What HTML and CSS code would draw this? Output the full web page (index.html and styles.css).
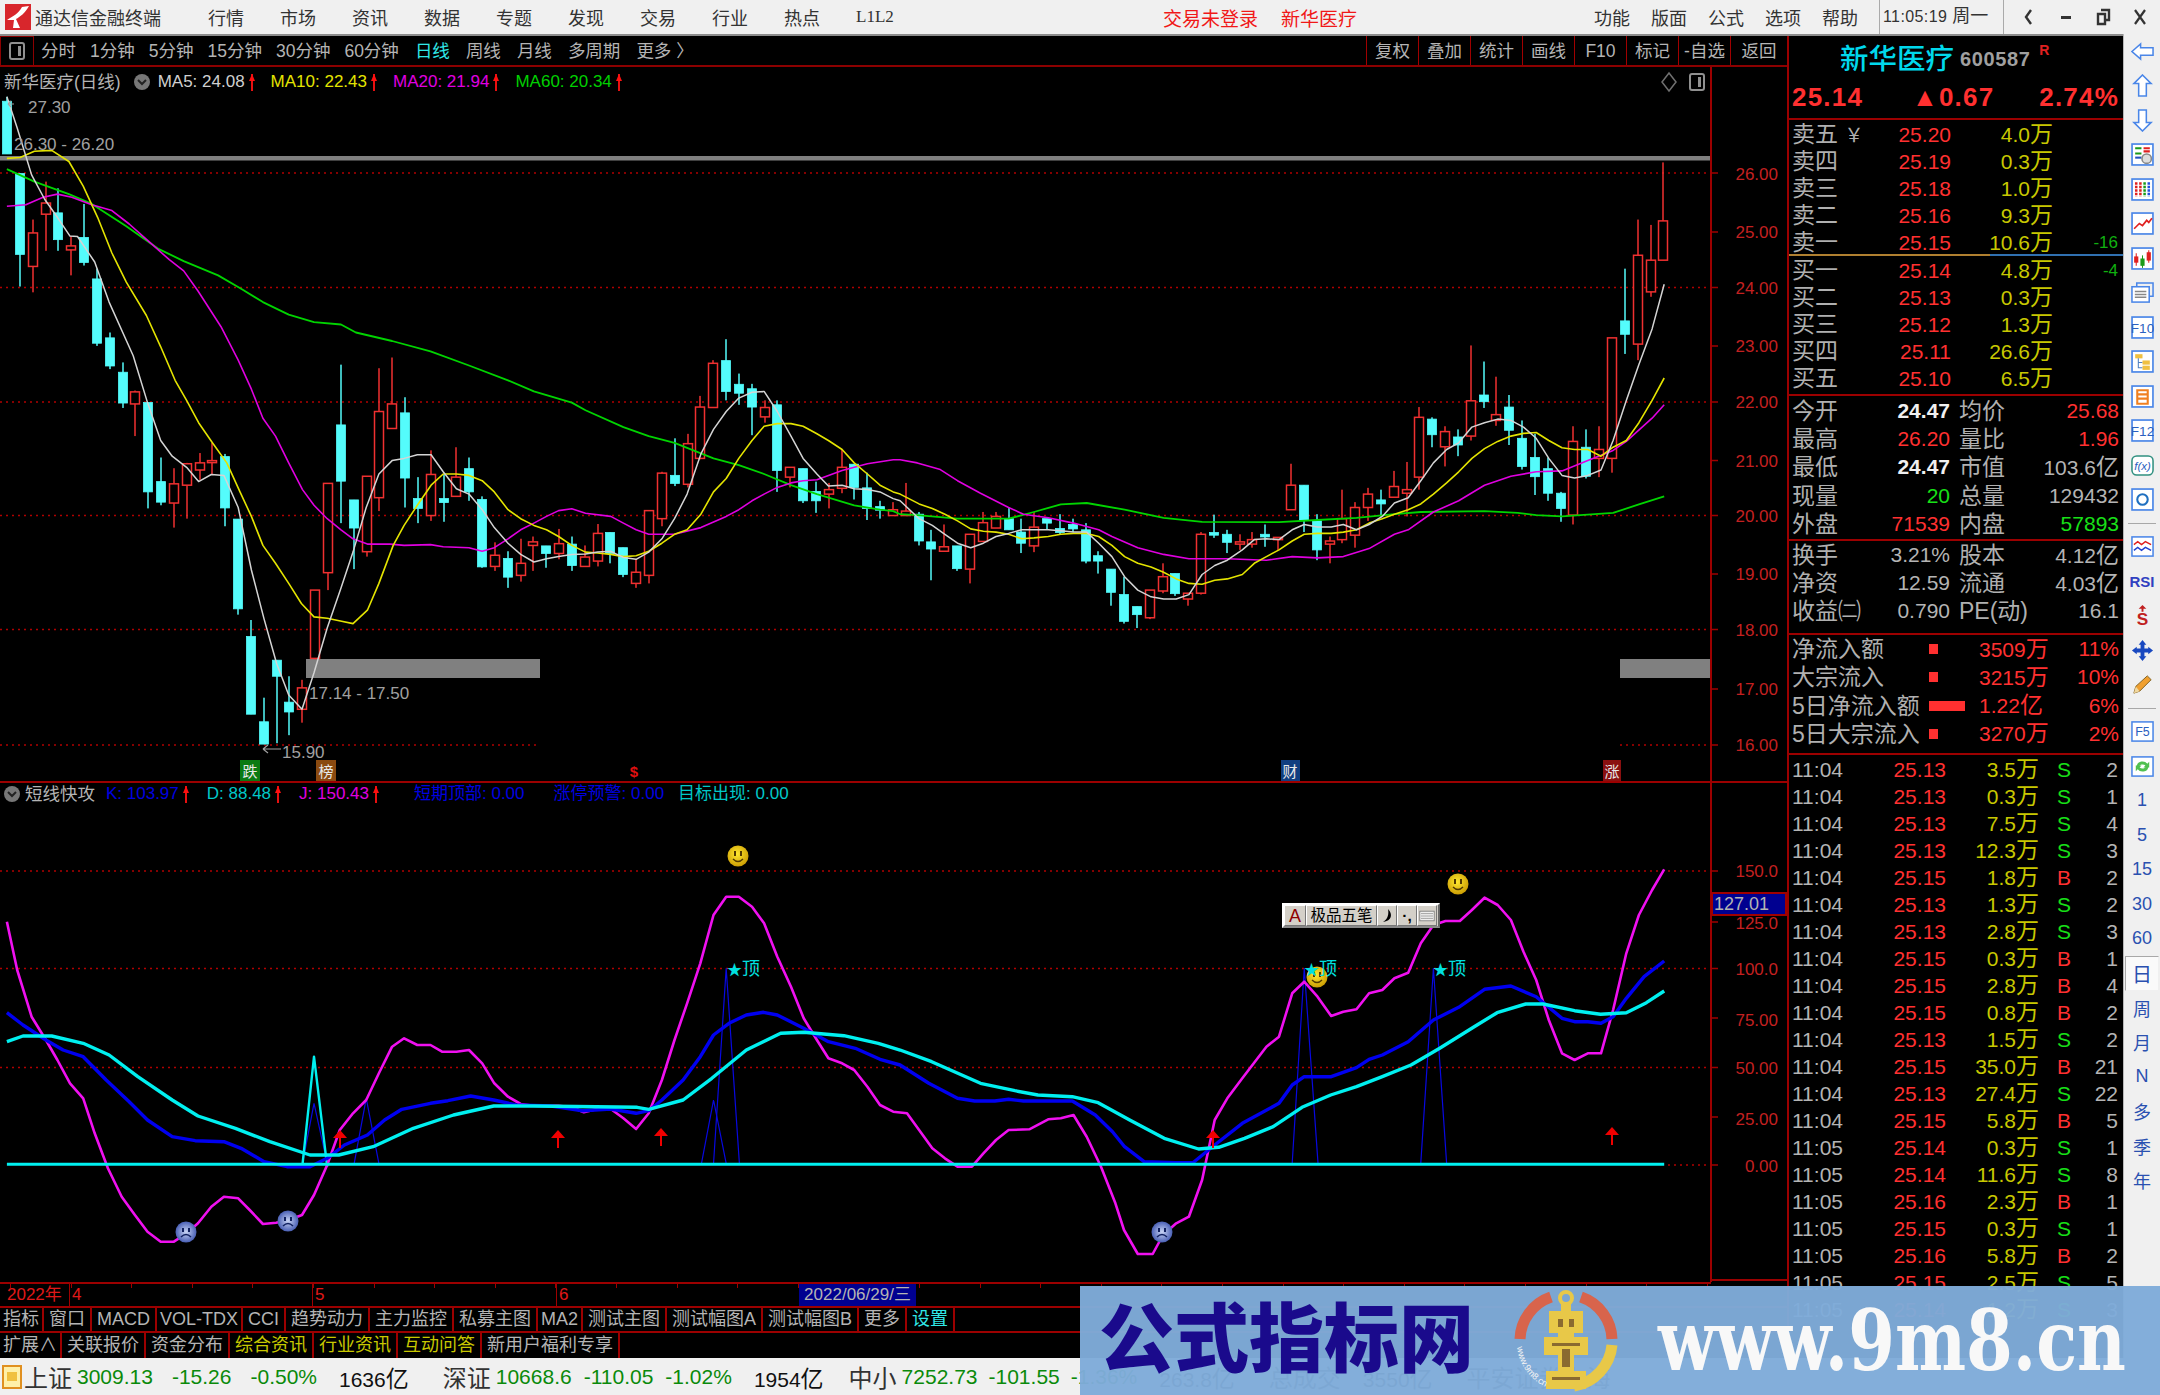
FILE: index.html
```html
<!DOCTYPE html>
<html lang="zh-CN">
<head>
    <meta charset="UTF-8">
    <title>通达信金融终端</title>
    <link rel="stylesheet" href="styles.css">
</head>
<body>
<div class="app">

    <header class="titlebar">
        <svg class="app-logo" viewBox="0 0 26 26">
            <rect width="26" height="26" fill="#d8262c"/>
            <path d="M2 16 C8 12 13 10 17 3 L24 2 C20 9 15 13 11 15 L15 24 L8 24 L9 16 Z" fill="#fff"/>
        </svg>
        <span class="app-name">通达信金融终端</span>
        <nav class="menu">
            <span>行情</span><span>市场</span><span>资讯</span><span>数据</span><span>专题</span>
            <span>发现</span><span>交易</span><span>行业</span><span>热点</span><span class="menu-l2">L1L2</span>
        </nav>
        <div class="notice"><span>交易未登录</span><span>新华医疗</span></div>
        <div class="title-right">
            <nav class="menu menu-small">
                <span>功能</span><span>版面</span><span>公式</span><span>选项</span><span>帮助</span>
            </nav>
            <div class="clock"><span class="clock-time">11:05:19</span> 周一</div>
            <div class="win-ctrl">
                <svg viewBox="0 0 16 20"><path d="M10 3 L5 10 L10 17" fill="none" stroke="#333" stroke-width="2.4"/></svg>
                <svg viewBox="0 0 16 20"><rect x="3" y="9" width="10" height="3" fill="#333"/></svg>
                <svg viewBox="0 0 16 20"><path d="M6 3 H14 V13 H11 M3 7 H10 V17 H3 Z" fill="none" stroke="#333" stroke-width="2.4"/></svg>
                <svg viewBox="0 0 16 20"><path d="M3 3 L13 17 M13 3 L3 17" fill="none" stroke="#333" stroke-width="2.2"/></svg>
            </div>
        </div>
    </header>

    <div class="main">
        <div class="left">
            <div class="period-bar">
                <div class="panel-toggle"><svg viewBox="0 0 16 18"><use href="#ic-panel"/></svg></div>
                <div class="periods">
                    <span>分时</span><span>1分钟</span><span>5分钟</span><span>15分钟</span><span>30分钟</span><span>60分钟</span>
                    <span class="on">日线</span><span>周线</span><span>月线</span><span>多周期</span><span>更多 〉</span>
                </div>
                <div class="period-btns">
                    <span>复权</span><span>叠加</span><span>统计</span><span>画线</span><span>F10</span>
                    <span>标记</span><span>-自选</span><span>返回</span>
                </div>
            </div>

            <div class="chart-area">
                <svg id="chart" class="chart" viewBox="0 67 1787 1215">
                    <defs>
                        <symbol id="ic-panel" viewBox="0 0 16 18">
                            <rect x="1" y="1" width="14" height="16" rx="2" fill="none" stroke="#909090" stroke-width="2"/>
                            <rect x="9" y="4" width="3" height="10" fill="#909090"/>
                        </symbol>
                        <radialGradient id="g-smile" cx="45%" cy="40%" r="65%">
                            <stop offset="0" stop-color="#ffe830"/><stop offset="1" stop-color="#c89800"/>
                        </radialGradient>
                        <radialGradient id="g-frown" cx="50%" cy="50%" r="60%">
                            <stop offset="0" stop-color="#c8d4f4"/><stop offset="1" stop-color="#3048a8"/>
                        </radialGradient>
                        <symbol id="smile" viewBox="0 0 22 22">
                            <circle cx="11" cy="11" r="10.5" fill="url(#g-smile)"/>
                            <rect x="7" y="6" width="2" height="5" fill="#503800"/><rect x="13" y="6" width="2" height="5" fill="#503800"/>
                            <path d="M6 14 Q11 19 16 14" fill="none" stroke="#503800" stroke-width="1.4"/>
                        </symbol>
                        <symbol id="frown" viewBox="0 0 22 22">
                            <circle cx="11" cy="11" r="10.5" fill="url(#g-frown)"/>
                            <rect x="7" y="7" width="2" height="4" fill="#102060"/><rect x="13" y="7" width="2" height="4" fill="#102060"/>
                            <path d="M6 16 Q11 11 16 16" fill="none" stroke="#102060" stroke-width="1.4"/>
                        </symbol>
                        <symbol id="uparrow" viewBox="0 0 14 18">
                            <path d="M7 0 L14 8 H8 V18 H6 V8 H0 Z" fill="#f00000"/>
                        </symbol>
                    </defs>

                    <g class="grid">
                        <line x1="0" y1="173" x2="1711" y2="173"/>
                        <line x1="0" y1="287.5" x2="1711" y2="287.5"/>
                        <line x1="0" y1="402" x2="1711" y2="402"/>
                        <line x1="0" y1="515.5" x2="1711" y2="515.5"/>
                        <line x1="0" y1="629.5" x2="1711" y2="629.5"/>
                        <line x1="0" y1="745" x2="540" y2="745"/>
                        <line x1="1620" y1="745" x2="1711" y2="745"/>
                        <line x1="0" y1="871" x2="1711" y2="871"/>
                        <line x1="0" y1="968.5" x2="1711" y2="968.5"/>
                        <line x1="0" y1="1067.5" x2="1711" y2="1067.5"/>
                        <line x1="1668" y1="1165" x2="1711" y2="1165"/>
                    </g>

                    <rect class="hbar" x="0" y="156" width="1710" height="4.5"/>
                    <rect class="hbar" x="306" y="659" width="234" height="19"/>
                    <rect class="hbar" x="1620" y="659" width="90" height="19"/>

                    <g id="candles"></g>
                    <g id="lines"></g>

                    <g class="ptxt">
                        <path class="ptr" d="M14 104 L8 104 M8 104 L11 101 M8 104 L11 107"/>
                        <text x="28" y="107">27.30</text>
                        <text x="14" y="144">26.30 - 26.20</text>
                        <text x="309" y="693">17.14 - 17.50</text>
                        <path class="ptr" d="M281 749 L263 749 M263 749 L268 745 M263 749 L268 753"/>
                        <text x="282" y="752">15.90</text>
                    </g>

                    <g class="badges">
                        <rect x="240" y="760" width="20" height="21" fill="#0a7a12"/><text x="250" y="771">跌</text>
                        <rect x="316" y="760" width="20" height="21" fill="#8a4a10"/><text x="326" y="771">榜</text>
                        <text x="634" y="771" class="dollar">$</text>
                        <rect x="1281" y="760" width="19" height="21" fill="#103e80"/><text x="1290" y="771">财</text>
                        <rect x="1603" y="760" width="18" height="21" fill="#8a1010"/><text x="1612" y="771">涨</text>
                    </g>

                    <g class="axis-lines">
                        <line x1="0" y1="782" x2="1787" y2="782"/>
                        <line x1="1711" y1="67" x2="1711" y2="1282"/>
                        <line x1="1711" y1="1280" x2="1787" y2="1280"/>
                    </g>
                    <g class="ticks">
                        <path d="M1711 173 h7 M1711 232 h7 M1711 287.5 h7 M1711 346 h7 M1711 402 h7 M1711 460.5 h7 M1711 515.5 h7 M1711 574 h7 M1711 629.5 h7 M1711 689 h7 M1711 745 h7 M1711 871 h7 M1711 922 h7 M1711 968.5 h7 M1711 1018 h7 M1711 1067.5 h7 M1711 1117 h7 M1711 1165 h7"/>
                    </g>
                    <g class="ax">
                        <text x="1778" y="174">26.00</text><text x="1778" y="232">25.00</text>
                        <text x="1778" y="288">24.00</text><text x="1778" y="346">23.00</text>
                        <text x="1778" y="402">22.00</text><text x="1778" y="461">21.00</text>
                        <text x="1778" y="516">20.00</text><text x="1778" y="574">19.00</text>
                        <text x="1778" y="630">18.00</text><text x="1778" y="689">17.00</text>
                        <text x="1778" y="745">16.00</text>
                        <text x="1778" y="871">150.0</text><text x="1778" y="923">125.0</text>
                        <text x="1778" y="969">100.0</text><text x="1778" y="1020">75.00</text>
                        <text x="1778" y="1068">50.00</text><text x="1778" y="1119">25.00</text>
                        <text x="1778" y="1166">0.00</text>
                    </g>
                    <rect class="tag" x="1712" y="893" width="74" height="22"/>
                    <text class="tag-text" x="1714" y="904">127.01</text>

                    <g id="spikes"></g>
                    <g id="kdj"></g>

                    <use href="#uparrow" x="333" y="1130" width="14" height="18"/>
                    <use href="#uparrow" x="551" y="1130" width="14" height="18"/>
                    <use href="#uparrow" x="654" y="1128" width="14" height="18"/>
                    <use href="#uparrow" x="1206" y="1130" width="14" height="18"/>
                    <use href="#uparrow" x="1605" y="1127" width="14" height="18"/>

                    <use href="#smile" x="727" y="845" width="22" height="22"/>
                    <use href="#smile" x="1306" y="966" width="22" height="22"/>
                    <use href="#smile" x="1447" y="873" width="22" height="22"/>
                    <use href="#frown" x="175" y="1221" width="22" height="22"/>
                    <use href="#frown" x="277" y="1210" width="22" height="22"/>
                    <use href="#frown" x="1151" y="1221" width="22" height="22"/>

                    <g class="top-sign">
                        <text x="727" y="969"><tspan class="star">★</tspan>顶</text>
                        <text x="1304" y="969"><tspan class="star">★</tspan>顶</text>
                        <text x="1433" y="969"><tspan class="star">★</tspan>顶</text>
                    </g>

                    <path d="M1669 73 L1676 82 L1669 91 L1662 82 Z" fill="none" stroke="#707070" stroke-width="1.5"/>
                    <use href="#ic-panel" x="1689" y="73" width="16" height="18"/>
                </svg>

                <div class="legend legend-main">
                    <span class="stock-name">新华医疗(日线)</span>
                    <svg class="chev" viewBox="0 0 16 16"><circle cx="8" cy="8" r="8" fill="#777"/><path d="M4 6 L8 10 L12 6" fill="none" stroke="#222" stroke-width="2"/></svg>
                    <span class="lg c-white">MA5: 24.08</span><i class="up"></i>
                    <span class="lg c-yellow">MA10: 22.43</span><i class="up"></i>
                    <span class="lg c-magenta">MA20: 21.94</span><i class="up"></i>
                    <span class="lg c-green">MA60: 20.34</span><i class="up"></i>
                </div>

                <div class="legend legend-sub">
                    <svg class="chev" viewBox="0 0 16 16"><circle cx="8" cy="8" r="8" fill="#777"/><path d="M4 6 L8 10 L12 6" fill="none" stroke="#222" stroke-width="2"/></svg>
                    <span class="stock-name">短线快攻</span>
                    <span class="lg c-blue">K: 103.97</span><i class="up"></i>
                    <span class="lg c-teal">D: 88.48</span><i class="up"></i>
                    <span class="lg c-magenta">J: 150.43</span><i class="up"></i>
                    <span class="lg c-blue lg-top">短期顶部: 0.00</span>
                    <span class="lg c-blue lg-limit">涨停预警: 0.00</span>
                    <span class="lg c-teal lg-goal">目标出现: 0.00</span>
                </div>

                <div class="ime">
                    <span class="ime-a">A</span>
                    <span class="ime-name">极品五笔</span>
                    <span class="ime-btn"><svg viewBox="0 0 14 16"><path d="M8 1 C13 6 12 13 3 14 C8 11 9 6 8 1 Z" fill="#000"/></svg></span>
                    <span class="ime-btn ime-punct">·,</span>
                    <span class="ime-btn"><svg viewBox="0 0 20 16"><rect x="1" y="2" width="18" height="12" fill="#eee" stroke="#777"/><path d="M3 5 H17 M3 8 H17 M3 11 H17" stroke="#555" stroke-dasharray="1.5 1"/></svg></span>
                </div>
            </div>

            <div class="date-bar">
                <span class="dc dc-year">2022年</span>
                <span class="dc dc-4">4</span>
                <span class="dc dc-5">5</span>
                <span class="dc dc-6">6</span>
                <span class="dc-now">2022/06/29/三</span>
            </div>

            <div class="tabs tabs-1">
                <span class="t-tight">指标</span><span>窗口</span><span>MACD</span><span class="t-tight">VOL-TDX</span><span>CCI</span><span>趋势动力</span>
                <span>主力监控</span><span>私募主图</span><span class="t-tight">MA2</span><span>测试主图</span><span>测试幅图A</span><span>测试幅图B</span>
                <span>更多</span><span class="t-cyan">设置</span>
            </div>
            <div class="tabs tabs-2">
                <span class="t-tight">扩展∧</span><span>关联报价</span><span>资金分布</span><span class="t-yellow">综合资讯</span>
                <span class="t-yellow">行业资讯</span><span class="t-yellow">互动问答</span><span>新用户福利专享</span>
            </div>
        </div>

        <aside class="quote">
            <div class="q-head">
                <div class="q-name"><b>新华医疗</b><span class="q-code">600587</span><sup>R</sup></div>
                <div class="q-price"><span>25.14</span><span>▲0.67</span><span>2.74%</span></div>
            </div>

            <div class="book book-sell">
                <div class="b-row"><span class="cn">卖五 <small>￥</small></span><span class="red">25.20</span><span class="vol">4.0<em>万</em></span><span></span></div>
                <div class="b-row"><span class="cn">卖四</span><span class="red">25.19</span><span class="vol">0.3<em>万</em></span><span></span></div>
                <div class="b-row"><span class="cn">卖三</span><span class="red">25.18</span><span class="vol">1.0<em>万</em></span><span></span></div>
                <div class="b-row"><span class="cn">卖二</span><span class="red">25.16</span><span class="vol">9.3<em>万</em></span><span></span></div>
                <div class="b-row"><span class="cn">卖一</span><span class="red">25.15</span><span class="vol">10.6<em>万</em></span><span class="delta">-16</span></div>
            </div>
            <div class="book book-buy">
                <div class="b-row"><span class="cn">买一</span><span class="red">25.14</span><span class="vol">4.8<em>万</em></span><span class="delta">-4</span></div>
                <div class="b-row"><span class="cn">买二</span><span class="red">25.13</span><span class="vol">0.3<em>万</em></span><span></span></div>
                <div class="b-row"><span class="cn">买三</span><span class="red">25.12</span><span class="vol">1.3<em>万</em></span><span></span></div>
                <div class="b-row"><span class="cn">买四</span><span class="red">25.11</span><span class="vol">26.6<em>万</em></span><span></span></div>
                <div class="b-row"><span class="cn">买五</span><span class="red">25.10</span><span class="vol">6.5<em>万</em></span><span></span></div>
            </div>

            <div class="stats stats-1">
                <div class="s-row"><span class="cn">今开</span><span class="white">24.47</span><span class="cn">均价</span><span class="red">25.68</span></div>
                <div class="s-row"><span class="cn">最高</span><span class="red">26.20</span><span class="cn">量比</span><span class="red">1.96</span></div>
                <div class="s-row"><span class="cn">最低</span><span class="white">24.47</span><span class="cn">市值</span><span>103.6<em class="cn">亿</em></span></div>
                <div class="s-row"><span class="cn">现量</span><span class="green">20</span><span class="cn">总量</span><span>129432</span></div>
                <div class="s-row"><span class="cn">外盘</span><span class="red">71539</span><span class="cn">内盘</span><span class="green">57893</span></div>
            </div>
            <div class="stats stats-2">
                <div class="s-row"><span class="cn">换手</span><span>3.21%</span><span class="cn">股本</span><span>4.12<em class="cn">亿</em></span></div>
                <div class="s-row"><span class="cn">净资</span><span>12.59</span><span class="cn">流通</span><span>4.03<em class="cn">亿</em></span></div>
                <div class="s-row"><span class="cn">收益㈡</span><span>0.790</span><span class="cn">PE(动)</span><span>16.1</span></div>
            </div>

            <div class="flow">
                <div class="f-row"><span class="cn">净流入额</span><i class="f-bar"></i><span class="red">3509<em>万</em></span><span class="red">11%</span></div>
                <div class="f-row"><span class="cn">大宗流入</span><i class="f-bar"></i><span class="red">3215<em>万</em></span><span class="red">10%</span></div>
                <div class="f-row"><span class="cn">5日净流入额</span><i class="f-bar f-long"></i><span class="red">1.22<em>亿</em></span><span class="red">6%</span></div>
                <div class="f-row"><span class="cn">5日大宗流入</span><i class="f-bar"></i><span class="red">3270<em>万</em></span><span class="red">2%</span></div>
            </div>

            <div class="trades">
                <div class="t-row"><span>11:04</span><span class="red">25.13</span><span class="vol">3.5<em>万</em></span><span class="green">S</span><span>2</span></div>
                <div class="t-row"><span>11:04</span><span class="red">25.13</span><span class="vol">0.3<em>万</em></span><span class="green">S</span><span>1</span></div>
                <div class="t-row"><span>11:04</span><span class="red">25.13</span><span class="vol">7.5<em>万</em></span><span class="green">S</span><span>4</span></div>
                <div class="t-row"><span>11:04</span><span class="red">25.13</span><span class="vol">12.3<em>万</em></span><span class="green">S</span><span>3</span></div>
                <div class="t-row"><span>11:04</span><span class="red">25.15</span><span class="vol">1.8<em>万</em></span><span class="red">B</span><span>2</span></div>
                <div class="t-row"><span>11:04</span><span class="red">25.13</span><span class="vol">1.3<em>万</em></span><span class="green">S</span><span>2</span></div>
                <div class="t-row"><span>11:04</span><span class="red">25.13</span><span class="vol">2.8<em>万</em></span><span class="green">S</span><span>3</span></div>
                <div class="t-row"><span>11:04</span><span class="red">25.15</span><span class="vol">0.3<em>万</em></span><span class="red">B</span><span>1</span></div>
                <div class="t-row"><span>11:04</span><span class="red">25.15</span><span class="vol">2.8<em>万</em></span><span class="red">B</span><span>4</span></div>
                <div class="t-row"><span>11:04</span><span class="red">25.15</span><span class="vol">0.8<em>万</em></span><span class="red">B</span><span>2</span></div>
                <div class="t-row"><span>11:04</span><span class="red">25.13</span><span class="vol">1.5<em>万</em></span><span class="green">S</span><span>2</span></div>
                <div class="t-row"><span>11:04</span><span class="red">25.15</span><span class="vol">35.0<em>万</em></span><span class="red">B</span><span>21</span></div>
                <div class="t-row"><span>11:04</span><span class="red">25.13</span><span class="vol">27.4<em>万</em></span><span class="green">S</span><span>22</span></div>
                <div class="t-row"><span>11:04</span><span class="red">25.15</span><span class="vol">5.8<em>万</em></span><span class="red">B</span><span>5</span></div>
                <div class="t-row"><span>11:05</span><span class="red">25.14</span><span class="vol">0.3<em>万</em></span><span class="green">S</span><span>1</span></div>
                <div class="t-row"><span>11:05</span><span class="red">25.14</span><span class="vol">11.6<em>万</em></span><span class="green">S</span><span>8</span></div>
                <div class="t-row"><span>11:05</span><span class="red">25.16</span><span class="vol">2.3<em>万</em></span><span class="red">B</span><span>1</span></div>
                <div class="t-row"><span>11:05</span><span class="red">25.15</span><span class="vol">0.3<em>万</em></span><span class="green">S</span><span>1</span></div>
                <div class="t-row"><span>11:05</span><span class="red">25.16</span><span class="vol">5.8<em>万</em></span><span class="red">B</span><span>2</span></div>
                <div class="t-row"><span>11:05</span><span class="red">25.15</span><span class="vol">2.5<em>万</em></span><span class="green">S</span><span>5</span></div>
                <div class="t-row"><span>11:05</span><span class="red">25.14</span><span class="vol">1.2<em>万</em></span><span class="green">S</span><span>3</span></div>
            </div>
        </aside>

        <nav class="sidetool">
            <a><svg viewBox="0 0 24 18"><path d="M1 9 L10 1 V5 H23 V13 H10 V17 Z" class="ic-arrow"/></svg></a>
            <a><svg viewBox="0 0 20 24"><path d="M10 1 L19 10 H14 V23 H6 V10 H1 Z" class="ic-arrow"/></svg></a>
            <a><svg viewBox="0 0 20 24"><path d="M10 23 L19 14 H14 V1 H6 V14 H1 Z" class="ic-arrow"/></svg></a>
            <a><svg viewBox="0 0 22 22"><rect x="1" y="1" width="20" height="20" class="ic-box"/><path d="M4 5 H10 M4 10 H10" stroke="#1a9a1a" stroke-width="2"/><path d="M12 5 H18 M12 8 H18" stroke="#e02020" stroke-width="2"/><path d="M4 14 H10" stroke="#2050c0" stroke-width="2"/><circle cx="15" cy="15" r="4.5" fill="#ddd" stroke="#888" stroke-width="1.5"/></svg></a>
            <a><svg viewBox="0 0 22 22"><rect x="1" y="1" width="20" height="20" class="ic-box"/><path d="M5 4 V18 M9 4 V18" stroke="#e02020" stroke-width="2.4" stroke-dasharray="2.4 1"/><path d="M13 4 V18" stroke="#1a9a1a" stroke-width="2.4" stroke-dasharray="2.4 1"/><path d="M17 4 V18" stroke="#2050e0" stroke-width="2.4" stroke-dasharray="2.4 1"/></svg></a>
            <a><svg viewBox="0 0 22 22"><rect x="1" y="1" width="20" height="20" class="ic-box"/><path d="M3 16 L8 11 L11 13 L15 8 L17 10 L20 6" fill="none" stroke="#e02020" stroke-width="1.6"/></svg></a>
            <a><svg viewBox="0 0 22 22"><rect x="1" y="1" width="20" height="20" class="ic-box"/><rect x="3" y="9" width="4" height="6" fill="#e02020"/><path d="M5 6 V18" stroke="#e02020"/><rect x="9" y="11" width="4" height="7" fill="#1a9a1a"/><path d="M11 8 V20" stroke="#1a9a1a"/><rect x="15" y="5" width="4" height="8" fill="#e02020"/><path d="M17 3 V15" stroke="#e02020"/></svg></a>
            <a><svg viewBox="0 0 24 22"><path d="M6 5 V1 H23 V15 H19" class="ic-line"/><rect x="1" y="5" width="18" height="16" class="ic-box"/><path d="M4 10 H16 M4 13 H16 M4 16 H16" stroke="#888" stroke-width="1.6"/></svg></a>
            <a><svg viewBox="0 0 22 22"><rect x="1" y="1" width="20" height="20" class="ic-box"/><text x="11" y="16" class="ic-text">F10</text></svg></a>
            <a><svg viewBox="0 0 22 22"><rect x="1" y="1" width="20" height="20" class="ic-box"/><rect x="4" y="4" width="7" height="4" fill="#f0c040"/><path d="M7 8 V17 H11 M7 12 H11" stroke="#5080c0" fill="none"/><rect x="11" y="10" width="7" height="4" fill="#f0c040"/><rect x="11" y="15" width="7" height="4" fill="#f0c040"/></svg></a>
            <a><svg viewBox="0 0 22 22"><rect x="1" y="1" width="20" height="20" class="ic-box"/><path d="M6 5 H16 V18 H6 Z M6 9 H16 M6 13 H16" fill="none" stroke="#f08020" stroke-width="2"/></svg></a>
            <a><svg viewBox="0 0 22 22"><rect x="1" y="1" width="20" height="20" class="ic-box"/><text x="11" y="16" class="ic-text">F12</text></svg></a>
            <a><svg viewBox="0 0 24 22"><rect x="1" y="1" width="22" height="20" rx="5" fill="#fff" stroke="#309080" stroke-width="1.6"/><text x="12" y="16" class="ic-text ic-fx">f(x)</text></svg></a>
            <a><svg viewBox="0 0 22 22"><rect x="1" y="1" width="20" height="20" class="ic-box"/><circle cx="11" cy="11" r="5" fill="none" stroke="#2070c0" stroke-width="2"/></svg></a>
            <i class="tool-sep"></i>
            <a><svg viewBox="0 0 24 22"><rect x="1" y="1" width="22" height="20" class="ic-box"/><path d="M3 9 L7 6 L11 9 L15 6 L21 9" fill="none" stroke="#e02020" stroke-width="1.5"/><path d="M3 15 L7 12 L11 15 L15 12 L21 15" fill="none" stroke="#2040d0" stroke-width="1.5"/></svg></a>
            <a class="tool-rsi">RSI</a>
            <a><svg viewBox="0 0 22 24"><path d="M11 1 L15 5 H12 V8 H10 V5 H7 Z" fill="#c02020"/><text x="11" y="22" class="ic-s">S</text></svg></a>
            <a><svg viewBox="0 0 24 24"><path d="M12 1 L16 6 H14 V10 H18 V8 L23 12 L18 16 V14 H14 V18 H16 L12 23 L8 18 H10 V14 H6 V16 L1 12 L6 8 V10 H10 V6 H8 Z" fill="#1848c0"/></svg></a>
            <a><svg viewBox="0 0 24 24"><path d="M3 21 L5 14 L17 3 L21 7 L9 19 Z" fill="#f0a030" stroke="#806020"/><path d="M3 21 L5 14 L9 19 Z" fill="#f0d8a0"/></svg></a>
            <i class="tool-sep"></i>
            <a><svg viewBox="0 0 24 22"><rect x="1" y="1" width="22" height="20" class="ic-box"/><text x="12" y="16" class="ic-text">F5</text></svg></a>
            <a><svg viewBox="0 0 24 22"><rect x="1" y="1" width="22" height="20" class="ic-box"/><path d="M6 10 A6 5 0 0 1 17 8 L19 6 V12 H13 L15 10 A4 3 0 0 0 8 11 Z M18 12 A6 5 0 0 1 7 14 L5 16 V10 H11 L9 12 A4 3 0 0 0 16 11 Z" fill="#50c050"/></svg></a>
            <a>1</a><a>5</a><a>15</a><a>30</a><a>60</a>
            <a class="tool-on">日</a><a>周</a><a>月</a><a>N</a><a>多</a><a>季</a><a>年</a>
        </nav>
    </div>

    <footer class="status">
        <svg class="st-icon" viewBox="0 0 20 24"><rect x="1" y="1" width="18" height="22" fill="#fff0a8" stroke="#e09020" stroke-width="2"/><rect x="5" y="7" width="10" height="9" fill="#f0c040"/></svg>
        <span class="st-name">上证</span><span class="st-val st-first">3009.13</span><span class="st-val st-a">-15.26</span><span class="st-val st-a">-0.50%</span><span class="st-amt">1636<em>亿</em></span>
        <span class="st-name st-next">深证</span><span class="st-val st-first st-b">10668.6</span><span class="st-val st-b">-110.05</span><span class="st-val st-b">-1.02%</span><span class="st-amt">1954<em>亿</em></span>
        <span class="st-name st-next st-c">中小</span><span class="st-val st-first st-b">7252.73</span><span class="st-val st-c">-101.55</span><span class="st-val st-c">-1.36%</span><span class="st-amt">263.8<em>亿</em></span>
        <span class="st-name st-next">总成交</span><span class="st-amt">3550<em>亿</em></span><span class="st-name st-next">平安证券上海</span>
    </footer>

    <div class="watermark">
        <span class="wm-cn">公式指标网</span>
        <svg class="wm-logo" viewBox="0 0 104 104">
            <defs><path id="wm-arc" d="M3 58 A50 50 0 0 0 46 102"/></defs>
            <path d="M6 50 A46 46 0 0 1 37 8" class="wm-ring"/>
            <path d="M67 8 A46 46 0 0 1 98 50" class="wm-ring"/>
            <path d="M98 56 A46 46 0 0 1 60 97" class="wm-ring wm-ring-y"/>
            <circle cx="52" cy="9" r="6" fill="none" stroke="#e8c848" stroke-width="4"/>
            <path d="M47 15 H57 V22 H69 V44 H60 V48 H74 V66 H60 V82 H72 V100 H32 V82 H44 V66 H30 V48 H44 V44 H35 V22 H47 Z" fill="#e8c848"/>
            <path d="M44 30 H49 V38 H44 Z M55 30 H60 V38 H55 Z M38 54 H66 V57 H38 Z M48 60 H56 V78 H48 Z M38 88 H66 V91 H38 Z" fill="#8a6a30"/>
            <text class="wm-small"><textPath href="#wm-arc">www.9m8.cn</textPath></text>
        </svg>
        <span class="wm-url">www.9m8.cn</span>
    </div>
</div>
<script src="chart.js"></script>
</body>
</html>
```

FILE: styles.css
```css
* {
    margin: 0;
    padding: 0;
    box-sizing: border-box;
}

body {
    background: #000;
    color: #b4b4b4;
    font-family: "Liberation Sans", "Noto Sans CJK SC", sans-serif;
    font-size: 17px;
    overflow: hidden;
}

em, i {
    font-style: normal;
}

.app {
    position: relative;
    width: 2160px;
    height: 1395px;
    overflow: hidden;
    display: flex;
    flex-direction: column;
}

/* title bar */
.titlebar {
    height: 36px;
    flex: none;
    background: #f0f0f0;
    border-bottom: 2px solid #8c8c8c;
    color: #333;
    font-size: 18px;
    display: flex;
    align-items: center;
}

.app-logo {
    width: 26px;
    height: 26px;
    margin-left: 5px;
}

.app-name {
    margin-left: 4px;
    width: 126px;
    white-space: nowrap;
}

.menu {
    margin-left: 47px;
    display: flex;
    align-items: center;
}

.menu span {
    width: 72px;
}

.menu .menu-l2 {
    font-family: "Liberation Serif", serif;
    font-size: 17px;
}

.menu-small {
    margin-left: 0;
}

.menu-small span {
    width: 57px;
}

.notice {
    margin-left: 235px;
    color: #f01818;
    font-size: 19px;
    display: flex;
    gap: 23px;
}

.title-right {
    margin-left: auto;
    display: flex;
    align-items: center;
    height: 100%;
}

.clock {
    width: 125px;
    height: 100%;
    border-left: 1px solid #aaa;
    border-right: 1px solid #aaa;
    line-height: 33px;
    padding-left: 3px;
    white-space: nowrap;
}

.clock-time {
    font-size: 16px;
    letter-spacing: .4px;
}

.win-ctrl {
    width: 156px;
    padding-left: 17px;
    display: flex;
    gap: 21px;
}

.win-ctrl svg {
    width: 16px;
    height: 20px;
}

/* main split */
.main {
    flex: none;
    height: 1322px;
    display: flex;
}

.left {
    width: 1787px;
    flex: none;
    display: flex;
    flex-direction: column;
}

.period-bar {
    height: 31px;
    flex: none;
    border-bottom: 2px solid #8c0000;
    display: flex;
    font-size: 17.5px;
    line-height: 30px;
    color: #b4b4b4;
}

.panel-toggle {
    width: 34px;
    border: 1px solid #8c0000;
    border-bottom: 0;
    display: flex;
    align-items: center;
    justify-content: center;
}

.panel-toggle svg {
    width: 16px;
    height: 18px;
}

.periods {
    margin-left: 7px;
    display: flex;
    gap: 14px;
}

.periods .on, .periods .on ~ span {
    margin-left: 2px;
}

.periods .on {
    color: #30e8e8;
}

.period-btns {
    margin-left: auto;
    display: flex;
}

.period-btns span {
    width: 52px;
    text-align: center;
    border-left: 1px solid #a00000;
    white-space: nowrap;
}

.period-btns span:last-child {
    width: 57px;
}

/* chart pane: the svg is a free canvas, labels lie over it */
.chart-area {
    position: relative;
    flex: 1;
}

.chart {
    position: absolute;
    left: 0;
    top: 0;
    width: 1787px;
    height: 1215px;
    font-size: 17px;
}

.chart text {
    dominant-baseline: central;
}

.grid line {
    stroke: #b00000;
    stroke-width: 1.5;
    stroke-dasharray: 2 4;
}

.hbar {
    fill: #808080;
}

.axis-lines line {
    stroke: #9c0000;
    stroke-width: 2;
}

.ticks path {
    stroke: #a00000;
    stroke-width: 1.5;
}

.ax text {
    fill: #c42020;
    text-anchor: end;
}

.ptxt text {
    fill: #a0a0a0;
}

.ptr {
    stroke: #a0a0a0;
    stroke-width: 1.2;
    fill: none;
}

.badges text {
    fill: #e8e8e8;
    font-size: 15px;
    text-anchor: middle;
}

.badges .dollar {
    fill: #e01010;
    font-weight: bold;
}

.tag {
    fill: #000090;
    stroke: #a00000;
    stroke-width: 2;
}

.tag-text {
    fill: #b4b4b4;
    font-size: 18px;
}

.top-sign text {
    fill: #00e0e0;
    font-size: 18px;
}

.star {
    font-size: 15px;
}

.legend {
    position: absolute;
    left: 4px;
    height: 20px;
    display: flex;
    align-items: center;
    white-space: nowrap;
    line-height: 20px;
}

.legend-main {
    top: 5px;
}

.legend-sub {
    top: 717px;
    left: 4px;
}

.stock-name {
    color: #b4b4b4;
    font-size: 17.5px;
}

.chev {
    width: 16px;
    height: 16px;
    margin: 0 8px 0 13px;
}

.legend-sub .chev {
    margin: 0 5px 0 0;
}

.legend-sub .stock-name {
    margin-right: 11px;
}

.up {
    position: relative;
    width: 2px;
    height: 17px;
    margin: 1px 18px 0 6px;
    background: #e81010;
    flex: none;
}

.up::before {
    content: "";
    position: absolute;
    left: -2px;
    top: 0;
    border: 3px solid transparent;
    border-top: 0;
    border-bottom: 7px solid #ff1010;
}

.legend-sub .up {
    margin-right: 20px;
}

.legend-sub .lg-top { margin-left: 17px; }
.legend-sub .lg-limit { margin-left: 29px; }
.legend-sub .lg-goal { margin-left: 14px; }

.c-white { color: #d0d0d0; }
.c-yellow { color: #e4e400; }
.c-magenta { color: #e000e0; }
.c-green { color: #00d000; }
.c-blue { color: #0000e0; }
.c-teal { color: #00c8c8; }

/* input method floater */
.ime {
    position: absolute;
    left: 1282px;
    top: 836px;
    width: 158px;
    height: 25px;
    background: #d4d0c8;
    border: 2px solid;
    border-color: #fff #666 #888 #fff;
    display: flex;
    align-items: stretch;
    color: #000;
    font-size: 15.5px;
    line-height: 20px;
}

.ime > span {
    border: 1px solid;
    border-color: #fff #777 #777 #fff;
    display: flex;
    align-items: center;
    justify-content: center;
}

.ime-a {
    width: 22px;
    color: #900000;
    font-size: 18px;
}

.ime-name {
    width: 71px;
    white-space: nowrap;
}

.ime-btn {
    width: 20px;
}

.ime-btn svg {
    width: 16px;
    height: 16px;
}

.ime-punct {
    font-weight: bold;
}

/* date strip */
.date-bar {
    height: 24px;
    flex: none;
    width: 1711px;
    border-top: 2px solid #9c0000;
    color: #e01818;
    font-size: 17px;
    line-height: 22px;
    display: flex;
    background: repeating-linear-gradient(90deg, #a00000 0 1px, transparent 1px 60.6px) 10px 0 / 100% 4px no-repeat;
}

.dc {
    border-right: 1px solid #a00000;
    padding-left: 3px;
    white-space: nowrap;
}

.dc-year { width: 70px; padding-left: 7px; }
.dc-4 { width: 243px; padding-left: 2px; }
.dc-5 { width: 244px; padding-left: 2px; }
.dc-6 { width: 242px; border-right: 0; padding-left: 2px; }

.dc-now {
    width: 117px;
    background: #000090;
    color: #b4b4b4;
    text-align: center;
    white-space: nowrap;
}

/* tabs */
.tabs {
    flex: none;
    display: flex;
    font-size: 18px;
    border-top: 2px solid #9c0000;
    white-space: nowrap;
}

.tabs-1 {
    height: 25px;
    line-height: 23px;
}

.tabs-2 {
    height: 27px;
    line-height: 25px;
}

.tabs span {
    padding: 0 5px;
    border-right: 2px solid #9c0000;
}

.tabs .t-tight {
    padding: 0 3px;
}

.t-cyan { color: #30e8e8; }
.t-yellow { color: #c8c800; }

/* quote panel */
.quote {
    width: 336px;
    flex: none;
    border-left: 2px solid #9c0000;
    font-size: 21px;
    overflow: hidden;
}

.q-head {
    height: 84px;
    border-bottom: 2px solid #9c0000;
}

.q-name {
    height: 41px;
    padding-left: 51px;
    display: flex;
    align-items: center;
    white-space: nowrap;
}

.q-name b {
    color: #00d8ec;
    font-size: 28.5px;
    font-weight: 500;
}

.q-code {
    margin-left: 6px;
    margin-top: 5px;
    font-size: 20px;
    font-weight: bold;
    letter-spacing: .6px;
    color: #a0a0a0;
}

.q-name sup {
    margin-left: 9px;
    margin-top: -14px;
    color: #e02020;
    font-size: 14px;
    font-weight: bold;
}

.q-price {
    height: 41px;
    padding: 0 4px 0 3px;
    display: grid;
    grid-template-columns: 120px 1fr auto;
    align-items: center;
    color: #ff3030;
    font-size: 26px;
    font-weight: bold;
    letter-spacing: 1.2px;
}

.book-sell {
    height: 136px;
    padding-top: 1px;
    background: linear-gradient(90deg, #b08030 0 201px, #3070b0 201px) bottom / 100% 2px no-repeat;
}

.book-buy {
    height: 139.5px;
    border-bottom: 2px solid #9c0000;
    padding-top: 1px;
}

.b-row {
    height: 27.1px;
    line-height: 27px;
    padding-left: 3px;
    display: grid;
    grid-template-columns: 84px 75px 102px 65px;
    white-space: nowrap;
}

.b-row > span + span, .f-row > span + span, .s-row > span:nth-child(even), .t-row > span {
    text-align: right;
}

.cn {
    font-size: 23px;
    color: #b0b0b0;
}

.cn small {
    font-size: 19px;
}

.red { color: #ff3030; }
.green { color: #18e018; }
.white { color: #f0f0f0; font-weight: bold; }

.vol {
    color: #c8c800;
}

.vol em {
    font-size: 23px;
}

.delta {
    color: #10b010;
    font-size: 17px;
}

.stats {
    border-bottom: 2px solid #9c0000;
}

.stats-1 {
    height: 145px;
    padding-top: 1px;
}

.stats-2 {
    height: 94px;
}

.s-row {
    height: 28.4px;
    line-height: 28px;
    padding-left: 3px;
    display: grid;
    grid-template-columns: 70px 88px 9px 55px 105px;
    white-space: nowrap;
}

.s-row > span:nth-child(3) {
    grid-column: 4;
}

.s-row > span:nth-child(4) {
    grid-column: 5;
    text-align: right;
}

.s-row em.cn {
    color: inherit;
}

.flow {
    height: 120px;
    border-bottom: 2px solid #9c0000;
}

.f-row {
    height: 28.3px;
    line-height: 28px;
    padding-left: 3px;
    display: grid;
    grid-template-columns: 137px 50px 78px 62px;
    align-items: center;
    white-space: nowrap;
}

.f-row em {
    font-size: 23px;
}

.f-bar {
    width: 9px;
    height: 10px;
    background: #ff3030;
}

.f-long {
    width: 36px;
}

.trades {
    padding-top: 1px;
}

.t-row {
    height: 27px;
    line-height: 27px;
    padding-left: 3px;
    display: grid;
    grid-template-columns: 70px 84px 93px 50px 29px;
    white-space: nowrap;
}

.t-row > span:first-child {
    text-align: left;
}

.t-row > span:nth-child(4) {
    text-align: center;
}

.t-row em {
    font-size: 23px;
}

/* side toolbar */
.sidetool {
    flex: 1;
    background: #f0f0f0;
    border-left: 1px solid #b8b8b8;
    margin-top: -2px;
    display: flex;
    flex-direction: column;
    color: #2a50b0;
    font-size: 18px;
}

.sidetool a {
    height: 34.5px;
    flex: none;
    display: flex;
    align-items: center;
    justify-content: center;
}

.sidetool svg {
    width: 23px;
    height: 23px;
}

.tool-sep {
    height: 12.5px;
    flex: none;
    display: flex;
    align-items: center;
    margin: 0 4px;
}

.tool-sep::before {
    content: "";
    flex: 1;
    height: 1px;
    background: #a8a8a8;
}

.sidetool .tool-on {
    background: #fafafa;
    border: 1px solid;
    border-color: #a8a8a8 #f0f0f0 #f0f0f0 #a8a8a8;
    margin: 0 1px;
    font-size: 20px;
}

.tool-rsi {
    color: #3040c0;
    font-weight: bold;
    font-size: 15px;
}

.ic-arrow {
    fill: #fff;
    stroke: #4a86e8;
    stroke-width: 1.6;
}

.ic-box {
    fill: #fff;
    stroke: #4a86e8;
    stroke-width: 1.6;
}

.ic-line {
    fill: none;
    stroke: #4a86e8;
    stroke-width: 1.6;
}

.ic-text {
    fill: #2a60c0;
    font-size: 13px;
    text-anchor: middle;
}

.ic-fx {
    font-style: italic;
    font-size: 12px;
}

.ic-s {
    fill: #c02020;
    font-size: 18px;
    font-weight: bold;
    text-anchor: middle;
}

/* bottom status */
.status {
    flex: none;
    height: 37px;
    background: #f0f0f0;
    color: #222;
    display: flex;
    align-items: center;
    font-size: 21px;
    white-space: nowrap;
}

.st-icon {
    width: 20px;
    height: 24px;
    margin: 0 2px;
    flex: none;
}

.st-name {
    font-size: 24px;
    color: #333;
}

.st-next {
    margin-left: 34px;
}

.st-next.st-c {
    margin-left: 25px;
}

.st-val {
    color: #0a8a0a;
    margin-left: 15px;
}

.st-val.st-a {
    margin-left: 19px;
}

.st-val.st-b {
    margin-left: 12px;
}

.st-val.st-c {
    margin-left: 11px;
}

.st-val.st-first {
    margin-left: 5px;
}

.st-amt {
    color: #111;
    margin-left: 22px;
}

.st-amt em {
    font-size: 23px;
}

/* site banner across the lower right */
.watermark {
    position: absolute;
    left: 1080px;
    top: 1286px;
    width: 1080px;
    height: 109px;
    background: rgba(127, 171, 217, .97);
    display: flex;
    align-items: center;
    white-space: nowrap;
}

.wm-cn {
    flex: none;
    margin-left: 19px;
    width: 377px;
    color: #1a0a8c;
    font-size: 75px;
    font-weight: 900;
    line-height: 75px;
}

.wm-logo {
    flex: none;
    margin-left: 38px;
    width: 104px;
    height: 104px;
}

.wm-ring {
    fill: none;
    stroke: #d8644c;
    stroke-width: 11;
}

.wm-ring-y {
    stroke: #e8c848;
}

.wm-small {
    fill: #f4f4f4;
    font-size: 9px;
}

.wm-url {
    flex: none;
    margin-left: 40px;
    color: #f8f8f8;
    font-family: "DejaVu Serif", serif;
    font-weight: bold;
    font-size: 84px;
    line-height: 84px;
    transform: scaleX(.8);
    transform-origin: left center;
}
```

FILE: chart.js
```js
// points were read off the screenshot at x*1.742, y*2.24 (price pane) and y*3 (lower pane)
const SVGNS = 'http://www.w3.org/2000/svg';
const CX = i => 7 + 12.84 * i;
const X = z => z / 1.742;
const PY = z => 70 + z / 2.24;
const SY = z => 770 + z / 3;
const SPLIT = 1568;

// [up?, bodyTop, bodyBottom, wickTop, wickBottom]
const CANDLES = [
    [0,70,188,60,188],[0,232,413,232,485],[1,365,440,335,498],[1,298,323,250,405],[0,320,380,265,405],
    [1,394,403,372,460],[0,375,431,300,438],[0,468,612,445,618],[0,600,663,588,670],[0,677,746,655,757],
    [1,721,748,718,820],[0,745,945,745,982],[0,922,968,868,975],[1,927,970,892,1025],[1,882,930,880,1005],
    [1,880,896,858,918],[1,875,877,835,905],[0,866,981,860,1022],[0,1006,1207,1006,1220],[0,1269,1443,1232,1443],
    [0,1460,1510,1406,1510],[0,1322,1358,1322,1508],[0,1416,1438,1358,1490],[1,1384,1432,1366,1462],[1,1165,1318,1165,1320],
    [1,926,1126,926,1165],[0,795,921,660,1015],[0,963,1026,963,1118],[1,910,1079,910,1090],[1,765,958,668,988],
    [1,748,803,644,803],[0,768,914,733,980],[0,960,982,912,1015],[1,906,998,852,1010],[0,960,969,906,1012],
    [1,912,955,845,955],[0,893,945,868,965],[0,962,1113,955,1115],[1,1087,1112,1058,1122],[0,1094,1136,1078,1160],
    [1,1105,1132,1050,1146],[1,1057,1065,1045,1122],[0,1066,1083,1066,1115],[1,1061,1083,1028,1096],[0,1062,1110,1045,1122],
    [1,1091,1112,1065,1112],[1,1038,1100,1017,1112],[0,1036,1083,1036,1105],[0,1070,1130,1070,1136],[1,1125,1150,1095,1160],
    [1,987,1132,987,1150],[1,903,1005,900,1022],[0,908,926,825,932],[1,837,928,815,935],[1,755,870,730,872],
    [1,657,756,650,757],[0,651,720,603,740],[0,704,724,680,750],[0,714,755,703,818],[1,756,777,740,790],
    [0,750,897,740,945],[1,890,912,890,935],[0,893,965,893,970],[0,944,965,922,992],[1,940,950,925,982],
    [1,890,937,850,948],[0,883,935,883,962],[0,936,982,902,1008],[0,978,986,965,1005],[1,985,998,968,998],
    [1,988,998,925,998],[0,995,1055,990,1065],[0,1057,1073,1030,1143],[1,1068,1078,1018,1078],[0,1066,1117,1066,1122],
    [1,1040,1118,1040,1150],[1,1014,1056,990,1056],[1,1000,1026,990,1026],[0,1005,1030,980,1030],[0,1035,1060,1005,1082],
    [1,1024,1066,990,1080],[0,1005,1015,1005,1030],[0,1027,1036,995,1040],[0,1018,1028,1005,1035],[0,1030,1100,1015,1105],
    [0,1088,1100,1078,1128],[0,1118,1170,1118,1200],[0,1175,1235,1135,1240],[0,1202,1220,1202,1250],[1,1165,1227,1165,1230],
    [1,1135,1167,1105,1172],[0,1128,1173,1128,1178],[1,1172,1185,1172,1200],[1,1040,1172,1035,1175],[0,1036,1042,996,1048],
    [0,1040,1058,1030,1082],[1,1057,1062,1040,1075],[1,1052,1062,1035,1070],[0,1040,1046,1018,1068],[1,1047,1052,1047,1075],
    [1,930,985,882,985],[0,930,1008,930,1035],[0,1010,1075,995,1098],[1,1055,1062,1045,1105],[1,1005,1052,940,1060],
    [1,980,1042,968,1070],[1,950,980,936,1010],[0,963,972,940,1000],[1,933,957,898,957],[1,940,948,878,1000],
    [1,778,912,755,940],[0,782,817,778,845],[1,810,844,798,888],[0,822,840,805,865],[1,741,820,617,830],
    [0,728,743,653,757],[1,772,785,687,797],[0,755,807,728,840],[0,825,888,785,895],[0,868,911,815,952],
    [0,893,948,868,965],[0,948,982,945,1012],[1,832,997,798,1018],[0,845,910,805,915],[1,850,870,798,912],
    [1,600,870,600,902],[0,562,592,445,636],[1,415,614,335,650],[1,426,497,347,508],[1,338,426,207,426]
];

const MA5 = ['12,60 30,130 55,235 78,290 100,330 122,372 135,373 165,430 190,520 232,640 257,745 280,830 300,865 325,890 346,922 368,906 390,908 415,980 438,1120 460,1230 482,1330 503,1400 526,1432 547,1350 570,1250 594,1160 615,1080 638,980 660,905 683,875 704,870 727,862 751,862 772,900 795,938 817,950 840,985 861,1025 885,1060 907,1085 930,1102 952,1095 973,1090 996,1085 1020,1084 1041,1080 1064,1078 1086,1092 1108,1096 1130,1080 1153,1050 1175,1005 1197,950 1221,860 1243,805 1265,765 1287,735 1310,722 1331,720 1354,765 1378,820 1399,870 1423,905 1443,932 1467,930 1488,938 1511,940 1533,945 1556,960',
    '0,965 33,1005 56,1020 78,1040 100,1060 123,1070 145,1060 167,1045 189,1038 212,1030 233,1030 258,1030 280,1032 302,1035 325,1035 346,1060 369,1090 391,1135 414,1165 437,1180 459,1185 481,1185 503,1175 526,1130 548,1110 570,1098 596,1075 617,1052 638,1050 660,1052 683,1030 704,1018 727,1024 751,1024 772,1018 795,1030 817,1018 840,1000 861,970 885,958 907,920 929,880 952,850 973,835 996,800 1018,790 1041,782 1064,785 1086,800 1108,825 1130,870 1153,908 1175,914 1198,908 1221,896 1242,830 1265,740 1287,660 1310,580 1331,480'];
const MA10 = ['12,198 35,196 60,182 90,180 120,205 145,260 170,330 195,410 220,475 255,550 280,620 305,695 325,740 346,790 370,835 395,880 418,945 438,1000 458,1065 480,1105 503,1150 525,1195 547,1225 570,1228 595,1235 615,1240 640,1210 660,1150 685,1065 704,1020 727,975 751,930 772,905 795,905 817,908 840,920 861,945 885,985 907,1005 930,1020 952,1030 973,1045 996,1065 1020,1080 1041,1082 1064,1085 1086,1090 1108,1088 1130,1078 1153,1060 1175,1040 1197,1030 1221,995 1243,945 1265,915 1287,870 1310,830 1331,798 1354,792 1378,792 1399,798 1423,815 1443,830 1467,850 1488,880 1511,905 1533,930 1556,945',
    '0,950 33,972 56,982 78,995 100,1010 123,1028 145,1033 167,1035 189,1040 212,1050 233,1048 258,1045 280,1040 302,1038 325,1038 346,1045 369,1065 391,1090 414,1105 437,1113 459,1125 481,1140 503,1150 526,1152 548,1143 570,1140 596,1130 617,1105 638,1090 660,1075 683,1055 704,1040 727,1038 751,1038 772,1035 795,1030 817,1015 840,1005 861,995 885,985 907,972 929,950 952,925 973,900 996,870 1018,848 1041,832 1064,820 1086,814 1108,812 1130,830 1153,846 1175,850 1198,850 1221,865 1242,845 1265,830 1287,790 1310,740 1331,690'];
const MA20 = ['12,305 45,302 75,285 100,278 125,285 160,302 195,315 225,345 260,385 295,425 320,450 345,495 385,575 415,650 438,715 458,780 480,820 503,880 527,940 547,975 570,1005 594,1030 615,1050 640,1062 680,1062 704,1065 750,1063 772,1068 817,1070 840,1078 861,1070 885,1050 907,1030 930,1015 952,1000 973,987 996,983 1020,993 1064,1000 1086,1015 1108,1030 1130,1040 1175,1040 1221,1025 1265,1000 1287,985 1310,965 1331,950 1354,935 1378,925 1399,920 1423,918 1467,897 1511,882 1556,873',
    '0,873 30,880 70,895 100,920 140,948 189,980 215,995 258,1003 302,1015 346,1030 369,1045 414,1070 459,1085 503,1095 570,1095 638,1098 683,1090 727,1093 772,1090 817,1072 861,1040 885,1030 929,990 973,965 1018,930 1064,910 1108,900 1153,898 1198,875 1242,852 1265,832 1310,780 1331,750'];
const MA60 = ['12,222 60,250 120,278 160,300 220,350 275,400 320,428 380,460 420,490 458,520 503,548 547,565 594,570 620,588 683,607 750,630 817,662 885,695 930,720 996,745 1020,762 1086,800 1130,820 1175,835 1243,870 1287,885 1331,905 1378,930 1423,950 1488,975 1533,985 1556,988',
    '0,995 30,997 100,1005 189,1005 233,990 280,973 325,970 391,985 459,1003 526,1012 660,1013 727,1008 795,1003 861,995 907,990 1018,988 1076,992 1108,997 1153,1000 1242,992 1287,973 1331,955'];

const LINE_J = ['12,455 30,600 55,740 80,810 100,870 122,940 145,985 165,1090 188,1195 212,1280 235,1335 257,1385 280,1415 303,1415 325,1390 345,1360 368,1310 390,1280 415,1285 435,1320 458,1362 481,1358 503,1350 526,1335 547,1275 570,1185 592,1080 615,1030 638,990 660,910 683,830 704,805 727,825 750,825 770,845 795,845 817,840 840,880 861,940 885,980 907,1002 930,1007 973,1007 996,1012 1017,1027 1041,1017 1064,1017 1086,1045 1108,1077 1130,1030 1153,930 1175,810 1197,700 1220,580 1243,435 1265,380 1287,380 1310,410 1331,460 1354,560 1378,650 1400,745 1423,810 1443,865 1467,880 1488,900 1511,950 1533,1005 1556,1025',
    '12,1030 33,1080 56,1135 78,1165 100,1190 125,1190 145,1150 167,1110 189,1080 225,1078 258,1048 280,1045 302,1035 325,1100 350,1190 375,1300 390,1380 414,1452 440,1452 458,1395 481,1360 503,1340 526,1230 548,1050 570,985 596,925 638,830 660,800 683,670 704,635 727,680 751,738 772,725 795,718 817,670 840,660 861,625 885,608 907,520 929,465 950,453 975,453 996,420 1018,383 1041,405 1064,450 1086,545 1108,630 1130,750 1153,850 1175,870 1198,850 1221,850 1242,720 1265,550 1287,435 1310,360 1331,298'];
const LINE_K = ['12,728 40,765 80,810 110,840 145,860 185,930 225,995 257,1050 300,1100 340,1112 390,1115 420,1135 460,1175 500,1190 540,1190 570,1165 600,1125 640,1095 670,1050 700,1018 750,1000 780,992 820,978 860,990 900,1005 960,1008 1015,1022 1064,1017 1108,1030 1130,1022 1153,990 1190,930 1220,860 1243,795 1270,760 1300,735 1330,727 1354,735 1400,775 1443,815 1490,835 1533,868',
    '0,885 50,940 100,985 130,993 165,993 189,988 215,993 300,993 340,1035 370,1085 391,1130 425,1175 480,1178 510,1178 548,1125 596,1060 660,1000 683,945 704,920 751,920 795,893 817,868 840,855 885,815 929,750 973,712 1018,658 1064,648 1108,680 1153,745 1175,755 1198,755 1221,760 1242,740 1265,685 1296,620 1331,573'];
const LINE_D = ['12,815 40,798 90,798 145,820 190,855 240,920 300,990 345,1038 410,1075 470,1115 540,1155 590,1155 650,1130 720,1075 790,1035 860,1008 930,1008 1110,1012 1130,1018 1190,990 1240,925 1300,840 1360,790 1400,787 1470,797 1530,820',
    '0,840 55,875 140,940 200,962 240,975 300,980 345,998 400,1050 460,1105 520,1137 555,1132 600,1105 650,1070 700,1012 750,975 795,950 840,920 890,885 940,835 1000,770 1040,728 1090,702 1120,702 1175,722 1220,733 1265,728 1300,698 1331,663'];

function el(name, attrs) {
    const node = document.createElementNS(SVGNS, name);
    for (const key in attrs) node.setAttribute(key, attrs[key]);
    return node;
}

function toPoints(parts, yOf) {
    const out = [];
    parts.forEach((part, n) => {
        part.split(' ').forEach(pair => {
            const [x, y] = pair.split(',').map(Number);
            out.push(X(x + n * SPLIT).toFixed(1) + ',' + yOf(y).toFixed(1));
        });
    });
    return out.join(' ');
}

function drawLine(group, parts, yOf, color, width) {
    group.appendChild(el('polyline', {
        points: toPoints(parts, yOf), fill: 'none', stroke: color,
        'stroke-width': width, 'stroke-linejoin': 'round'
    }));
}

const candleGroup = document.getElementById('candles');
CANDLES.forEach((c, i) => {
    const [up, top, bottom, hi, lo] = c;
    const x = Math.round(CX(i));
    const color = up ? '#f03030' : '#54fcfc';
    candleGroup.appendChild(el('rect', {
        x: x - 0.75, y: PY(hi), width: 1.5, height: PY(lo) - PY(hi), fill: color
    }));
    candleGroup.appendChild(el('rect', {
        x: x - 4.5, y: PY(top), width: 9, height: Math.max(PY(bottom) - PY(top), 2),
        fill: up ? '#000' : color, stroke: color, 'stroke-width': up ? 1.5 : 0.8
    }));
});

const lineGroup = document.getElementById('lines');
drawLine(lineGroup, MA60, PY, '#00d400', 1.8);
drawLine(lineGroup, MA20, PY, '#e000e0', 1.6);
drawLine(lineGroup, MA10, PY, '#e4e400', 1.6);
drawLine(lineGroup, MA5, PY, '#d4d4d4', 1.5);

const spikeGroup = document.getElementById('spikes');
[[527, 547, 570, 1000], [617, 638, 660, 985], [1222, 1243, 1265, 990], [1243, 1265, 1288, 595],
 [683 + SPLIT, 704 + SPLIT, 728 + SPLIT, 595], [907 + SPLIT, 929 + SPLIT, 952 + SPLIT, 595]].forEach(s => {
    spikeGroup.appendChild(el('polyline', {
        points: `${X(s[0])},${SY(1180)} ${X(s[1])},${SY(s[3])} ${X(s[2])},${SY(1180)}`,
        fill: 'none', stroke: '#0808e0', 'stroke-width': 1.2
    }));
});

const kdjGroup = document.getElementById('kdj');
drawLine(kdjGroup, ['527,1183 547,860 570,1190'], SY, '#00f0f0', 2.4);
drawLine(kdjGroup, LINE_J, SY, '#f010f0', 2.6);
drawLine(kdjGroup, LINE_K, SY, '#0000f0', 3.4);
drawLine(kdjGroup, LINE_D, SY, '#00f0f0', 3.4);
drawLine(kdjGroup, ['12,1183 1568,1183', '0,1183 1331,1183'], SY, '#00f0f0', 3);
```
